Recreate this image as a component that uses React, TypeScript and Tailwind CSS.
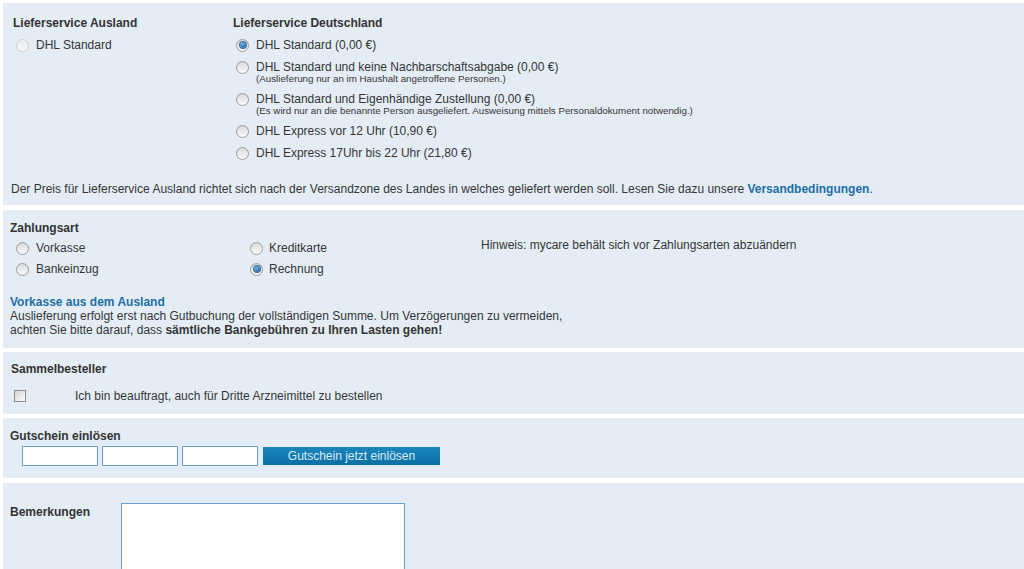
import React from 'react';

type RadioProps = {
  checked?: boolean;
  disabled?: boolean;
};

const Radio: React.FC<RadioProps> = ({ checked, disabled }) => (
  <span
    className={`relative inline-block w-[13px] h-[13px] shrink-0 rounded-full border ${
      disabled
        ? 'border-[#d0d0d0] bg-[linear-gradient(180deg,#ebebeb,#f9f9f9)]'
        : 'border-[#9c9c9c] bg-[linear-gradient(180deg,#dadada,#fbfbfb)]'
    }`}
  >
    {checked && (
      <span className="absolute left-[2.5px] top-[2.5px] w-[6px] h-[6px] rounded-full bg-[radial-gradient(circle_at_40%_35%,#6fb6ee,#0d4f92)] ring-1 ring-[#3a6c9c]" />
    )}
  </span>
);

const Option: React.FC<{ label: string; note?: string; checked?: boolean; disabled?: boolean }> = ({
  label,
  note,
  checked,
  disabled,
}) => (
  <div>
    <label className="flex items-center gap-[7px] ml-[3px] h-[14px] leading-[14px] text-[12px]">
      <Radio checked={checked} disabled={disabled} />
      <span>{label}</span>
    </label>
    {note && <div className="ml-[23px] text-[9.75px] leading-[10px]">{note}</div>}
  </div>
);

const Heading: React.FC<{ children: React.ReactNode }> = ({ children }) => (
  <h3 className="text-[12px] leading-[16px] font-bold text-[#333]">{children}</h3>
);

const App: React.FC = () => {
  const domestic = [
    { label: 'DHL Standard (0,00 €)', checked: true },
    {
      label: 'DHL Standard und keine Nachbarschaftsabgabe (0,00 €)',
      note: '(Auslieferung nur an im Haushalt angetroffene Personen.)',
    },
    {
      label: 'DHL Standard und Eigenhändige Zustellung (0,00 €)',
      note: '(Es wird nur an die benannte Person ausgeliefert. Ausweisung mittels Personaldokument notwendig.)',
    },
    { label: 'DHL Express vor 12 Uhr (10,90 €)' },
    { label: 'DHL Express 17Uhr bis 22 Uhr (21,80 €)' },
  ];

  return (
    <div className="h-screen bg-white pt-[3px] text-[#353535] font-['Liberation_Sans',Arial,sans-serif] overflow-hidden">
      {/* Lieferservice */}
      <section className="ml-[3px] h-[202px] bg-[#e4edf5] pt-[12px]">
        <div className="flex pl-[10px]">
          <div className="w-[220px]">
            <div className="mb-[7px]">
              <Heading>Lieferservice Ausland</Heading>
            </div>
            <Option label="DHL Standard" disabled />
          </div>
          <div>
            <div className="mb-[7px]">
              <Heading>Lieferservice Deutschland</Heading>
            </div>
            <div className="flex flex-col gap-[8px]">
              {domestic.map((o) => (
                <Option key={o.label} label={o.label} note={o.note} checked={o.checked} />
              ))}
            </div>
          </div>
        </div>
        <p className="mt-[22px] pl-[8px] text-[12px] leading-[14px]">
          Der Preis für Lieferservice Ausland richtet sich nach der Versandzone des Landes in welches geliefert
          werden soll. Lesen Sie dazu unsere{' '}
          <a className="font-bold text-[#1d6ea6]">Versandbedingungen</a>.
        </p>
      </section>

      {/* Zahlungsart */}
      <section className="ml-[3px] mt-[5px] h-[138px] bg-[#e4edf5] pt-[10px] pl-[7px]">
        <Heading>Zahlungsart</Heading>
        <div className="flex mt-[5px] text-[12px] leading-[14px]">
          <div className="w-[240px] flex flex-col gap-[7px] pl-[3px]">
            <label className="flex items-center gap-[7px] ml-[3px]">
              <Radio />
              <span>Vorkasse</span>
            </label>
            <label className="flex items-center gap-[7px] ml-[3px]">
              <Radio />
              <span>Bankeinzug</span>
            </label>
          </div>
          <div className="w-[231px] flex flex-col gap-[7px]">
            <label className="flex items-center gap-[6px]">
              <Radio />
              <span>Kreditkarte</span>
            </label>
            <label className="flex items-center gap-[6px]">
              <Radio checked />
              <span>Rechnung</span>
            </label>
          </div>
          <div className="-mt-[3px]">Hinweis: mycare behält sich vor Zahlungsarten abzuändern</div>
        </div>
        <div className="mt-[19px] text-[12px] leading-[14px]">
          <div className="font-bold text-[#1d6ea6]">Vorkasse aus dem Ausland</div>
          <div>
            Auslieferung erfolgt erst nach Gutbuchung der vollständigen Summe. Um Verzögerungen zu vermeiden,
            <br />
            achten Sie bitte darauf, dass <strong>sämtliche Bankgebühren zu Ihren Lasten gehen!</strong>
          </div>
        </div>
      </section>

      {/* Sammelbesteller */}
      <section className="ml-[3px] mt-[4px] h-[62px] bg-[#e4edf5] pt-[9px] pl-[8px]">
        <Heading>Sammelbesteller</Heading>
        <div className="flex items-center mt-[12px] text-[12px] leading-[14px]">
          <span className="ml-[3px] w-[12px] h-[12px] border border-[#8e8e8e] bg-[linear-gradient(135deg,#d4d4d4,#fdfdfd)]" />
          <span className="ml-[49px]">Ich bin beauftragt, auch für Dritte Arzneimittel zu bestellen</span>
        </div>
      </section>

      {/* Gutschein */}
      <section className="ml-[3px] mt-[4px] h-[60px] bg-[#e4edf5] pt-[10px] pl-[7px]">
        <Heading>Gutschein einlösen</Heading>
        <div className="flex items-center gap-[4px] mt-[2px] ml-[12px]">
          <input className="w-[76px] h-[20px] bg-white border border-[#6a9fd3] outline-none" />
          <input className="w-[76px] h-[20px] bg-white border border-[#6a9fd3] outline-none" />
          <input className="w-[76px] h-[20px] bg-white border border-[#6a9fd3] outline-none" />
          <button className="ml-[1px] w-[177px] h-[18px] bg-[linear-gradient(180deg,#1b86bd,#0b6fa3)] text-[12px] leading-[18px] text-[#dcebf6]">
            Gutschein jetzt einlösen
          </button>
        </div>
      </section>

      {/* Bemerkungen */}
      <section className="ml-[3px] mt-[5px] h-[110px] bg-[#e4edf5] pt-[20px] pl-[7px] flex items-start">
        <div className="w-[111px] mt-[1px]">
          <Heading>Bemerkungen</Heading>
        </div>
        <textarea className="w-[284px] h-[90px] bg-white border border-[#6a9fd3] outline-none resize-none" />
      </section>
    </div>
  );
};

export default App;
